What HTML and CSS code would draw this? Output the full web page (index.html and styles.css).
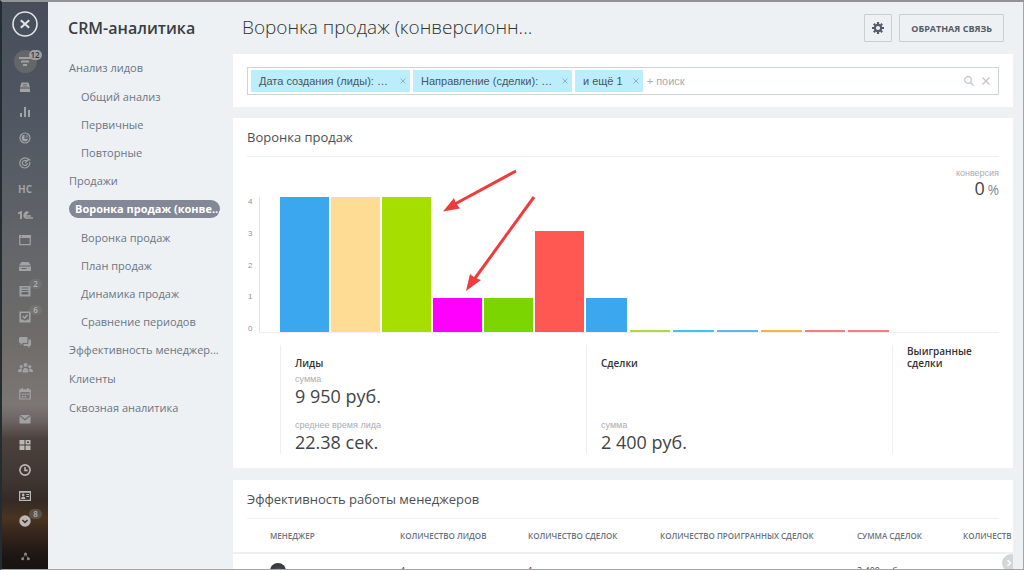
FILE: index.html
```html
<!DOCTYPE html>
<html lang="ru">
<head>
<meta charset="utf-8">
<meta name="viewport" content="width=device-width, initial-scale=1">
<title>CRM-аналитика</title>
<link rel="stylesheet" href="styles.css">
</head>
<body>
<div class="app">
  <nav class="rail" aria-label="Разделы">
    <div class="rail-top">
      <button class="rail-close" type="button" aria-label="Закрыть">
        <svg viewBox="0 0 26 26" width="26" height="26"><circle cx="13" cy="13" r="12" fill="none" stroke="currentColor" stroke-width="1.6"/><path d="M8.8 9.2l8.4 7.6M17.2 9.2l-8.4 7.6" stroke="currentColor" stroke-width="2"/></svg>
      </button>
      <a class="rail-current" href="#" aria-label="CRM"><svg viewBox="0 0 12 12" width="12" height="12" fill="currentColor"><path d="M0 1h12v2H0zM2 4.5h8v2H2zM4 8h4v2H4z"/></svg><span class="badge badge-light">12</span></a>
    </div>
    <ul class="rail-list">
      <li><a href="#" aria-label="Касса"><svg viewBox="0 0 12 12"><path d="M2.500 1.500h7l1.500 5H1zM1 7.500h10v3.500H1z"/><path class="cut" d="M4 3h4v.8H4zM3.500 4.800h5v.8h-5z"/></svg></a></li>
      <li><a href="#" aria-label="Отчёты"><svg viewBox="0 0 12 12"><path d="M1 7h2v4H1zM5 1h2v10H5zM9 4h2v7H9z"/></svg></a></li>
      <li><a href="#" aria-label="Маркетинг"><svg viewBox="0 0 12 12"><circle class="line" cx="6" cy="6" r="5"/><path d="M5.500 2.800a3.300 3.300 0 1 0 3.700 3.900H5.500z"/><path d="M6.500 2.500a3.500 3.500 0 0 1 3 3.200h-3z" opacity=".5"/></svg></a></li>
      <li><a href="#" aria-label="Цели"><svg viewBox="0 0 12 12"><path class="line" d="M8 1.500A5 5 0 1 0 10.700 5M7.500 4A2.500 2.500 0 1 0 8.400 6M6 6l4-4M9 0.700v2.200h2.400"/></svg></a></li>
      <li><a class="rail-text" href="#">НС</a></li>
      <li><a href="#" aria-label="1С"><svg class="wide" viewBox="0 0 15 12"><path d="M0 3.500L3 2h1v8H2V4.500L0 5.300z"/><path class="line thick" d="M10.500 3.600A2.900 2.900 0 1 0 8 9h7M9.500 5A1.200 1.200 0 1 0 8.500 7H13"/></svg></a></li>
      <li><a href="#" aria-label="Сайты"><svg viewBox="0 0 12 12"><path class="line" d="M.8 2h10.400v8.600H.8z"/><path d="M0 1h12v3H0z"/><path class="cut" d="M2 2h1v1H2z"/></svg></a></li>
      <li><a href="#" aria-label="Диск"><svg viewBox="0 0 12 12"><path d="M2.500 2h7L12 5.500H0zM0 6.500h12V11H0z"/><path class="cut" d="M2.500 8h5v1h-5z"/></svg></a></li>
      <li><a href="#" aria-label="Лента"><svg viewBox="0 0 12 12"><path d="M.5 1h11v10.500H.5z"/><path class="cut" d="M2.500 2.500h7v1h-7zM2.500 5h7v1h-7zM2.500 7h7v2.500h-7z"/></svg><span class="badge">2</span></a></li>
      <li><a href="#" aria-label="Задачи"><svg viewBox="0 0 12 12"><path class="line thick" d="M1.200 1.200h9.600v9.600H1.200z"/><path class="line thick" d="M3.600 5l2 2 3-3.200"/><path d="M1 8.500h3l1 1h2l1-1h3V11H1z"/></svg><span class="badge">6</span></a></li>
      <li><a href="#" aria-label="Чат"><svg viewBox="0 0 12 12"><path d="M1 1h6.500q1 0 1 1v4q0 1-1 1H4L1.500 9V7H1q-1 0-1-1V2q0-1 1-1z"/><path d="M9.500 3.500h1.500q1 0 1 1V9q0 1-1 1h-.5v2l-2-2H5.500q-1 0-1-1V8H8q1.500 0 1.500-1.500z"/></svg></a></li>
      <li><a href="#" aria-label="Группы"><svg class="wide" viewBox="0 0 15 12"><circle cx="7.500" cy="3" r="2"/><circle cx="3.200" cy="4.500" r="1.600"/><circle cx="11.800" cy="4.500" r="1.600"/><path d="M4.500 10.500q0-4.500 3-4.500t3 4.500zM0 10q0-3.500 3.200-3.500l1 .3Q3.500 8 3.500 10zM15 10q0-3.500-3.200-3.500l-1 .3q.7 1.200.7 3.200z"/></svg></a></li>
      <li><a href="#" aria-label="Календарь"><svg viewBox="0 0 12 12"><path class="line" d="M.8 2h10.400v9H.8z"/><path d="M.5 1.500h11V4H.5zM2.500 0h1.500v2H2.500zM8 0h1.500v2H8zM3 5.500h1.500V7H3zM5.500 5.500H7V7H5.500zM8 5.500h1.500V7H8zM3 8h1.500v1.500H3zM5.500 8H7v1.500H5.500z"/></svg></a></li>
      <li><a href="#" aria-label="Почта"><svg viewBox="0 0 12 12"><path d="M1 2h10L6 6zM.5 3l5.500 4.500L11.500 3v7.500H.5z"/></svg></a></li>
      <li><a class="bright" href="#" aria-label="Приложения"><svg viewBox="0 0 12 12"><path d="M.5 1h5v4.500h-5zM.5 6.500h5V11h-5zM6.500 6.500h5V11h-5z"/><path class="line thick" d="M7.300 1.800h3.400v3H7.300z"/></svg></a></li>
      <li><a class="bright" href="#" aria-label="Время"><svg viewBox="0 0 12 12"><circle class="line thick" cx="6" cy="6" r="5.100"/><path class="line thick" d="M6 3v3.400h2.700"/></svg></a></li>
      <li><a class="bright" href="#" aria-label="Контакты"><svg viewBox="0 0 12 12"><path d="M0 1h12v10H0z"/><path class="cut" d="M1.200 2.800h9.600V9.800H1.200z"/><circle cx="4.200" cy="4.900" r="1.300"/><path d="M2 9q0-2.500 2.200-2.500T6.500 9zM7.300 4h2.700v1H7.300zM7.300 6h2.700v1H7.300z"/></svg></a></li>
      <li><a class="bright" href="#" aria-label="Ещё"><svg viewBox="0 0 12 12"><circle cx="6" cy="6" r="5.700"/><path class="arrow" d="M3.500 5L6 7.500 8.500 5"/></svg><span class="badge">8</span></a></li>
    </ul>
    <a class="rail-bottom" href="#" aria-label="Карта сайта"><svg viewBox="0 0 12 12" width="9" height="9" fill="currentColor"><circle cx="6" cy="2.500" r="2"/><circle cx="2.200" cy="9" r="2"/><circle cx="9.800" cy="9" r="2"/><path d="M6 2.500L3 8M6 2.500L9 8" stroke="currentColor" stroke-width=".8"/></svg></a>
  </nav>

  <aside class="menu">
    <h2 class="menu-title">CRM-аналитика</h2>
    <ul class="menu-list">
      <li class="menu-group"><a href="#">Анализ лидов</a></li>
      <li class="menu-sub"><a href="#">Общий анализ</a></li>
      <li class="menu-sub"><a href="#">Первичные</a></li>
      <li class="menu-sub"><a href="#">Повторные</a></li>
      <li class="menu-group"><a href="#">Продажи</a></li>
      <li class="menu-active"><a href="#" aria-current="page">Воронка продаж (конве...</a></li>
      <li class="menu-sub"><a href="#">Воронка продаж</a></li>
      <li class="menu-sub"><a href="#">План продаж</a></li>
      <li class="menu-sub"><a href="#">Динамика продаж</a></li>
      <li class="menu-sub"><a href="#">Сравнение периодов</a></li>
      <li class="menu-group"><a href="#">Эффективность менеджер...</a></li>
      <li class="menu-group"><a href="#">Клиенты</a></li>
      <li class="menu-group"><a href="#">Сквозная аналитика</a></li>
    </ul>
  </aside>

  <main class="main">
    <header class="head">
      <h1 class="head-title">Воронка продаж (конверсионн...</h1>
      <div class="head-actions">
        <button class="btn btn-icon" type="button" aria-label="Настройки"><svg viewBox="0 0 12 12" width="12" height="12"><circle cx="6" cy="6" r="3.200" fill="none" stroke="currentColor" stroke-width="2.200"/><path d="M6 0v2M6 10v2M0 6h2M10 6h2M1.800 1.800l1.400 1.400M8.800 8.800l1.400 1.400M10.200 1.800L8.800 3.200M3.200 8.800l-1.400 1.400" stroke="currentColor" stroke-width="2.200"/></svg></button>
        <button class="btn" type="button">ОБРАТНАЯ СВЯЗЬ</button>
      </div>
    </header>

    <section class="card filter-card">
      <div class="filter">
        <span class="chip chip-long"><span>Дата создания (лиды): …</span><button type="button" aria-label="Убрать дату создания"><svg viewBox="0 0 6 6"><path d="M.5.5l5 5M5.500.5l-5 5"/></svg></button></span>
        <span class="chip chip-long"><span>Направление (сделки): …</span><button type="button" aria-label="Убрать направление"><svg viewBox="0 0 6 6"><path d="M.5.5l5 5M5.500.5l-5 5"/></svg></button></span>
        <span class="chip"><span>и ещё 1</span><button type="button" aria-label="Убрать остальные"><svg viewBox="0 0 6 6"><path d="M.5.5l5 5M5.500.5l-5 5"/></svg></button></span>
        <input class="filter-input" type="text" placeholder="+ поиск" aria-label="Поиск">
        <button class="filter-btn" type="button" aria-label="Найти"><svg viewBox="0 0 10 10"><circle cx="4" cy="4" r="3.300"/><path d="M6.500 6.500l3.200 3.200"/></svg></button>
        <button class="filter-btn" type="button" aria-label="Сбросить"><svg viewBox="0 0 10 10"><path d="M1.500 1.500l7 7M8.500 1.500l-7 7"/></svg></button>
      </div>
    </section>

    <section class="card funnel">
      <h2 class="card-title">Воронка продаж</h2>
      <div class="conversion">
        <div class="label">конверсия</div>
        <div class="conversion-value">0 <span>%</span></div>
      </div>
      <div class="plot">
        <div class="y-axis"><span>4</span><span>3</span><span>2</span><span>1</span><span>0</span></div>
        <div class="plot-area">
          <div class="bars bars-leads">
            <div class="bar blue" style="height:100%"></div>
            <div class="bar sand" style="height:100%"></div>
            <div class="bar lime" style="height:100%"></div>
            <div class="bar magenta" style="height:25%"></div>
            <div class="bar green" style="height:25%"></div>
            <div class="bar red" style="height:75%"></div>
          </div>
          <div class="bars bars-deals">
            <div class="bar blue" style="height:25%"></div>
            <div class="bar olive" style="height:0%"></div>
            <div class="bar cyan" style="height:0%"></div>
            <div class="bar sky" style="height:0%"></div>
            <div class="bar orange" style="height:0%"></div>
            <div class="bar rose" style="height:0%"></div>
            <div class="bar rose" style="height:0%"></div>
          </div>
          <div class="bars bars-won"></div>
        </div>
      </div>
      <div class="stages">
        <div class="stage">
          <h3>Лиды</h3>
          <div class="metric"><div class="label">сумма</div><div class="value">9 950 руб.</div></div>
          <div class="metric metric-last"><div class="label">среднее время лида</div><div class="value">22.38 сек.</div></div>
        </div>
        <div class="stage">
          <h3>Сделки</h3>
          <div class="metric metric-last"><div class="label">сумма</div><div class="value">2 400 руб.</div></div>
        </div>
        <div class="stage"><h3>Выигранные сделки</h3></div>
      </div>
      <svg class="arrows" viewBox="0 0 100 126" width="100" height="126" fill="#ef3b3b" stroke="#ef3b3b" aria-hidden="true">
        <path d="M74 3L12 36.500" stroke-width="3"/><path d="M1 43.500L12 30l1.500 4.500L18 40.500z" stroke="none"/>
        <path d="M92 29L31 113" stroke-width="3"/><path d="M24 123l4-17 5 4 6 2z" stroke="none"/>
      </svg>
    </section>

    <section class="card managers">
      <h2 class="card-title">Эффективность работы менеджеров</h2>
      <table class="table">
        <colgroup><col class="c-name"><col class="c-leads"><col class="c-deals"><col class="c-lost"><col class="c-sum"><col></colgroup>
        <thead><tr><th>МЕНЕДЖЕР</th><th>КОЛИЧЕСТВО ЛИДОВ</th><th>КОЛИЧЕСТВО СДЕЛОК</th><th>КОЛИЧЕСТВО ПРОИГРАННЫХ СДЕЛОК</th><th>СУММА СДЕЛОК</th><th>КОЛИЧЕСТВ</th></tr></thead>
        <tbody><tr><td><span class="avatar"></span></td><td>4</td><td>1</td><td></td><td>2 400 руб.</td><td></td></tr></tbody>
      </table>
      <button class="scroll-right" type="button" aria-label="Прокрутить вправо"><svg viewBox="0 0 8 8"><path d="M2.500 1l3 3-3 3"/></svg></button>
    </section>
  </main>
</div>
</body>
</html>
```
FILE: styles.css
```css
* { box-sizing: border-box; }
body { margin: 0; font-family: "Open Sans", "Noto Sans", sans-serif; color: #444; background: #edf1f4; }
h1, h2, h3, ul { margin: 0; padding: 0; list-style: none; }
a { color: inherit; text-decoration: none; }
button { font: inherit; color: inherit; background: none; border: 0; padding: 0; cursor: pointer; }
svg { display: block; flex: none; }

.app { display: flex; height: 100vh; overflow: hidden; border: 1px solid #a5a5a5; border-top: 2px solid #929394; border-left: 2px solid #232c30; }

/* Icon rail */
.rail { flex: 0 0 46px; display: flex; flex-direction: column; color: #a1a2a3;
  background: linear-gradient(#464e5b 0, #505762 20%, #626569 42%, #6f6c69 60%, #7c7775 71%, #6b6361 74%, #4b423e 77%, #3f3733 84%, #352a25 88%, #49341f 91%, #33251b 94%, #1b1513 98%, #181412 100%); }
.rail-top { flex: 0 0 72px; display: flex; flex-direction: column; align-items: center; gap: 13px; padding-top: 9px; }
.rail-close { color: #e2e4e6; }
.rail-current { position: relative; flex: none; display: flex; align-items: center; justify-content: center; width: 23px; height: 23px; border-radius: 50%; background: #646668; }
.rail-list { flex: 1; display: flex; flex-direction: column; }
.rail-list li { flex: 1; display: flex; align-items: center; justify-content: center; }
.rail-list a { position: relative; }
.rail-list svg { width: 12px; height: 12px; fill: currentColor; }
.rail-list svg.wide { width: 15px; }
.rail-list .cut { fill: #65666a; }
.rail-list .line { fill: none; stroke: currentColor; stroke-width: 1.2; }
.rail-list .thick { stroke-width: 1.6; }
.rail-list .arrow { fill: none; stroke: #3b302a; stroke-width: 1.5; }
.rail-list .bright { color: #bab7b5; }
.rail-list .bright .cut { fill: #3b322e; }
.rail-text { font-size: 10px; line-height: 12px; font-weight: 700; }
.rail-bottom { flex: 0 0 35px; display: flex; justify-content: center; padding-top: 18px; color: #8b8784; }
.badge { position: absolute; left: 10px; top: -6px; min-width: 13px; height: 10px; border-radius: 5px; font-size: 8px; line-height: 10px; font-weight: 600; text-align: center; color: #b4b4b4; background: rgba(130, 130, 130, .4); }
.badge-light { left: 15px; top: 0; color: #33383f; background: #9d9fa0; }

/* Section menu */
.menu { flex: 0 0 185px; min-width: 0; padding: 15px 13px 0 20px; color: #6b7583; }
.menu-title { font-size: 16px; line-height: 22px; font-weight: 600; color: #3a3d42; margin-bottom: 14px; }
.menu-list { font-size: 11px; }
.menu-list li { height: 28px; display: flex; align-items: center; padding-left: 1px; }
.menu-list .menu-group { margin-bottom: 1px; }
.menu-list a { white-space: nowrap; }
.menu-list .menu-sub { padding-left: 13px; }
.menu-list .menu-active a { flex: 1; min-width: 0; padding: 0 0 0 6px; border-radius: 9px; background: #828895; color: #fff; font-weight: 700; line-height: 18px; }

/* Main column */
.main { flex: 1; min-width: 0; display: flex; flex-direction: column; gap: 11px; padding-right: 10px; }
.head { flex: none; display: flex; justify-content: space-between; padding: 12px 9px 0 9px; height: 41px; }
.head-title { font-size: 19px; line-height: 26px; font-weight: 300; color: #333; white-space: nowrap; }
.head-actions { display: flex; gap: 7px; }
.btn { height: 28px; padding: 0 11px; border: 1px solid #c9ced3; border-radius: 1px; font-size: 9px; font-weight: 700; color: #535c69; }
.btn-icon { width: 28px; padding: 0 7px; }
.card { position: relative; flex: none; background: #fff; padding: 0 14px; }

.filter-card { padding: 13px 14px 12px; }
.filter { display: flex; align-items: center; gap: 3px; height: 28px; padding: 0 5px 0 3px; border: 1px solid #ced3d8; font-family: "Liberation Sans", Arial, sans-serif; font-size: 11px; }
.chip { flex: none; display: flex; align-items: center; justify-content: space-between; gap: 10px; height: 22px; padding: 0 4px 0 8px; background: #bcedfc; color: #49565f; white-space: nowrap; }
.chip-long { width: 159px; }
.chip svg { width: 6px; height: 6px; stroke: #8fb0bd; }
.filter-input { flex: 1; min-width: 0; border: 0; outline: 0; padding: 0 1px; font: inherit; background: none; }
.filter-input::placeholder { color: #a6abb1; opacity: 1; }
.filter-btn { padding: 0 2px; }
.filter-btn svg { width: 10px; height: 10px; fill: none; stroke: #bfc4c9; stroke-width: 1.2; }

.card-title { height: 39px; border-bottom: 1px solid #eeeff0; font-size: 13px; line-height: 39px; font-weight: 400; color: #4c4f53; }
.label { font-family: "Liberation Sans", Arial, sans-serif; font-size: 9px; line-height: 10px; color: #a8adb4; }
.conversion { padding-top: 11px; text-align: right; height: 40px; }
.conversion-value { font-size: 18px; line-height: 20px; }
.conversion-value span { font-size: 14px; color: #828b95; margin-left: -2px; }
.plot { display: flex; height: 136px; }
.y-axis { width: 12px; display: flex; flex-direction: column; justify-content: space-between; padding-left: 1px; font-family: "Liberation Sans", Arial, sans-serif; font-size: 8px; line-height: 9px; color: #8d949c; }
.plot-area { flex: 1; display: grid; grid-template-columns: 306fr 306fr 107fr; padding-left: 20px; border-left: 1px solid #e5e6e8; border-bottom: 1px solid #eeeff0; }
.bars { display: flex; align-items: flex-end; gap: 2px; padding-right: 2px; }
.bars-deals { gap: 3px; padding-right: 3px; }
.bar { flex: 1; min-height: 2px; }
.blue { background: #3aa7ef; }
.sand { background: #ffdc94; }
.lime { background: #a5de00; }
.magenta { background: #f0f; }
.green { background: #7bd500; }
.red { background: #ff5752; }
.olive { background: #b0d840; }
.cyan { background: #41c5ef; }
.sky { background: #64b5ec; }
.orange { background: #f4b445; }
.rose { background: #f07f7d; }

.stages { display: grid; grid-template-columns: 306fr 306fr 107fr; margin: 12px 0 0 33px; padding-bottom: 14px; }
.stage { display: flex; flex-direction: column; min-height: 109px; padding-left: 14px; border-left: 1px solid #eeeff0; }
.stage h3 { min-height: 24px; display: flex; align-items: flex-end; font-size: 10px; line-height: 12px; font-weight: 600; color: #333; }
.stage:last-child h3 { max-width: 80px; }
.metric { padding-top: 5px; }
.metric-last { margin-top: auto; }
.value { font-size: 18px; line-height: 24px; color: #444; }
.arrows { position: absolute; left: 209px; top: 50px; }

/* Managers table */
.managers { flex: 1 0 90px; min-height: 0; overflow: hidden; margin-top: 1px; }
.table { table-layout: fixed; width: calc(100% + 28px); margin: 0 -14px; border-collapse: collapse; }
.table th { height: 34px; padding: 0 0 0 3px; border-bottom: 2px solid #edf1f4; font-size: 8px; font-weight: 600; text-align: left; color: #69727e; white-space: nowrap; }
.table td { height: 34px; padding: 0 0 0 3px; font-size: 9px; white-space: nowrap; }
.table th:first-child, .table td:first-child { padding-left: 37px; }
.c-name { width: 164px; }
.c-leads { width: 128px; }
.c-deals { width: 132px; }
.c-lost { width: 197px; }
.c-sum { width: 106px; }
.avatar { display: block; width: 16px; height: 16px; border-radius: 50%; background: radial-gradient(circle at 50% 60%, #8b6a5e 0, #3c4049 45%, #2c323b 100%); }
.scroll-right { position: absolute; right: -7px; top: 74px; width: 18px; height: 18px; border-radius: 50%; background: #d3d6d9; }
.scroll-right svg { width: 8px; height: 8px; margin-left: 3px; fill: none; stroke: #fff; stroke-width: 1.3; }
```
